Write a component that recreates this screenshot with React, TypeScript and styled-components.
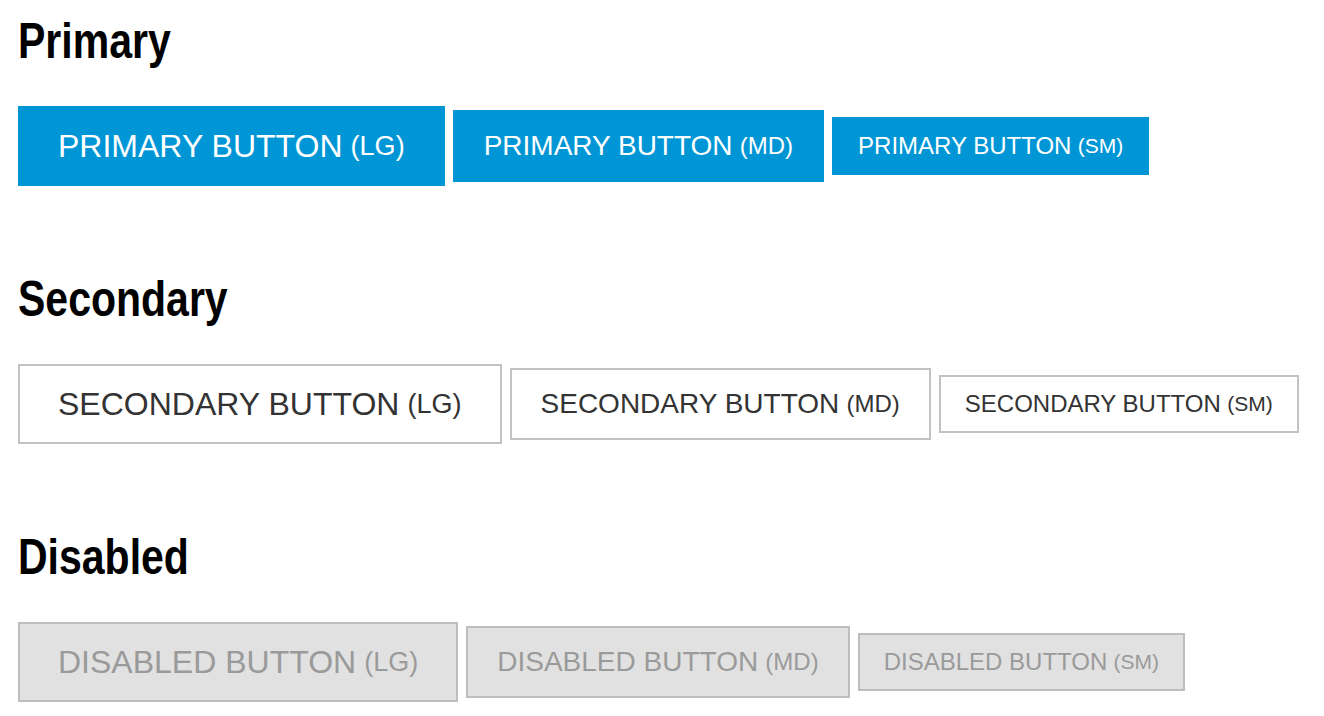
import React from "react";
import styled, { createGlobalStyle, css } from "styled-components";

const GlobalStyle = createGlobalStyle`
  html, body {
    margin: 0;
    padding: 0;
    background: #ffffff;
    font-family: "Liberation Sans", Arial, Helvetica, sans-serif;
  }
`;

type Size = "lg" | "md" | "sm";
type Variant = "primary" | "secondary" | "disabled";

const sizes: Record<Size, { h: number; px: number; fs: number; sfs: number }> = {
  lg: { h: 80, px: 38, fs: 32, sfs: 27 },
  md: { h: 72, px: 29, fs: 28, sfs: 24 },
  sm: { h: 58, px: 24, fs: 24, sfs: 21 },
};

const variants: Record<Variant, ReturnType<typeof css>> = {
  primary: css`
    background: #0096d6;
    border-color: #0096d6;
    color: #ffffff;
  `,
  secondary: css`
    background: #ffffff;
    border-color: #c2c2c2;
    color: #333333;
  `,
  disabled: css`
    background: #e1e1e1;
    border-color: #bdbdbd;
    color: #9a9a9a;
  `,
};

const Page = styled.main`
  display: flex;
  flex-direction: column;
  gap: 88px;
  padding: 16px 18px 0;
`;

const Section = styled.section`
  display: flex;
  flex-direction: column;
  align-items: flex-start;
`;

const Heading = styled.h2`
  margin: 0 0 40px;
  font-family: "Liberation Sans", Arial, Helvetica, sans-serif;
  font-size: 50px;
  line-height: 50px;
  font-weight: 700;
  color: #000000;
  transform: scaleX(0.82);
  transform-origin: left center;
`;

const Row = styled.div`
  display: flex;
  align-items: center;
  gap: 8px;
`;

const Button = styled.button<{ $size: Size; $variant: Variant }>`
  box-sizing: border-box;
  display: inline-flex;
  align-items: center;
  justify-content: center;
  white-space: nowrap;
  height: ${(p) => sizes[p.$size].h}px;
  padding: 0 ${(p) => sizes[p.$size].px}px;
  border: 2px solid;
  border-radius: 0;
  font-family: "Liberation Sans", Arial, Helvetica, sans-serif;
  font-size: ${(p) => sizes[p.$size].fs}px;
  font-weight: 400;
  text-transform: uppercase;
  cursor: ${(p) => (p.$variant === "disabled" ? "default" : "pointer")};
  ${(p) => variants[p.$variant]}
`;

const Suffix = styled.span<{ $size: Size }>`
  font-size: ${(p) => sizes[p.$size].sfs}px;
  margin-left: 0.3em;
`;

const groups: { title: string; variant: Variant; label: string }[] = [
  { title: "Primary", variant: "primary", label: "Primary Button" },
  { title: "Secondary", variant: "secondary", label: "Secondary Button" },
  { title: "Disabled", variant: "disabled", label: "Disabled Button" },
];

const sizeList: Size[] = ["lg", "md", "sm"];

export default function App() {
  return (
    <>
      <GlobalStyle />
      <Page>
        {groups.map((g) => (
          <Section key={g.title}>
            <Heading>{g.title}</Heading>
            <Row>
              {sizeList.map((s) => (
                <Button
                  key={s}
                  $size={s}
                  $variant={g.variant}
                  disabled={g.variant === "disabled"}
                >
                  {g.label}
                  <Suffix $size={s}>({s})</Suffix>
                </Button>
              ))}
            </Row>
          </Section>
        ))}
      </Page>
    </>
  );
}
